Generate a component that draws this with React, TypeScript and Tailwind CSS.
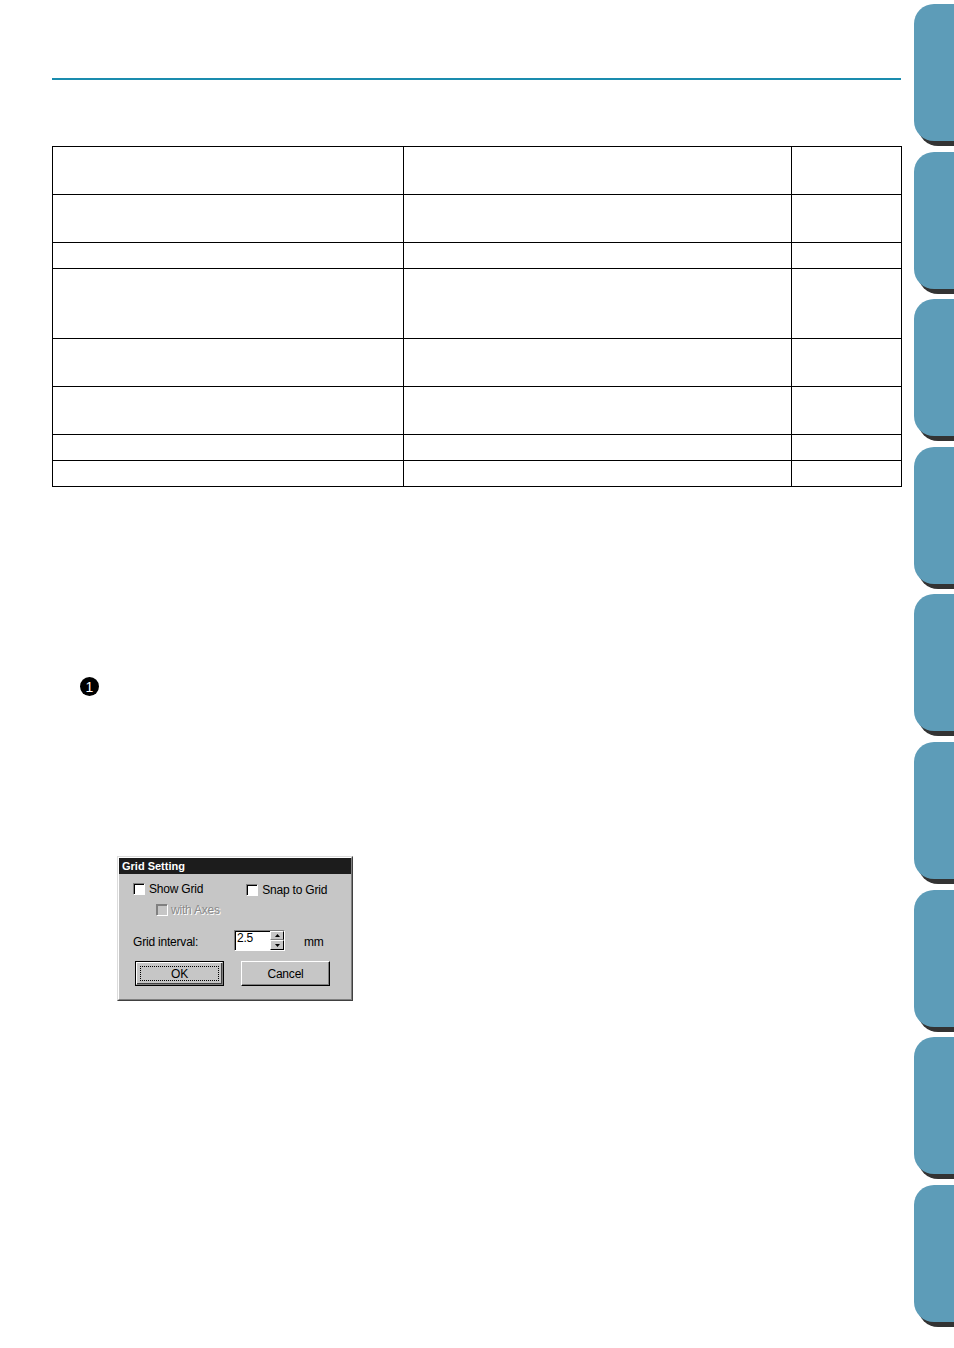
const rows = [48, 48, 26, 70, 48, 48, 26, 26];
const tabs = [0, 1, 2, 3, 4, 5, 6, 7, 8];

function Checkbox({ disabled }: { disabled?: boolean }) {
  return (
    <div
      className={`w-[12px] h-[12px] shrink-0 border border-t-[#808080] border-l-[#808080] border-r-white border-b-white ${
        disabled ? "bg-[#c6c6c6] shadow-[inset_1px_1px_0_#808080]" : "bg-white shadow-[inset_1px_1px_0_#000]"
      }`}
    />
  );
}

function Button({ label, primary }: { label: string; primary?: boolean }) {
  return (
    <div
      className={`w-[89px] h-[25px] flex items-center justify-center ${
        primary ? "border border-black" : "border border-t-white border-l-white border-r-black border-b-black"
      }`}
    >
      <div
        className={`w-full h-full flex items-center justify-center ${
          primary
            ? "border border-t-white border-l-white border-r-[#808080] border-b-[#808080] shadow-[inset_-1px_-1px_0_#404040]"
            : "shadow-[inset_-1px_-1px_0_#808080]"
        }`}
      >
        {primary ? (
          <div className="w-[79px] h-[15px] border border-dotted border-black flex items-center justify-center">
            {label}
          </div>
        ) : (
          label
        )}
      </div>
    </div>
  );
}

function GridDialog() {
  return (
    <div className="w-[236px] h-[145px] border border-t-[#dcdcdc] border-l-[#dcdcdc] border-r-[#404040] border-b-[#404040] bg-[#c6c6c6]">
      <div className="w-full h-full border border-t-white border-l-white border-r-[#808080] border-b-[#808080] flex flex-col text-[12px] leading-[14px] text-black font-['Liberation_Sans',Arial,sans-serif] tracking-[-0.2px]">
        <div className="h-[16px] bg-[#1c1c1c] text-white font-bold text-[11px] leading-[16px] pl-[3px] tracking-normal">Grid Setting</div>
        <div className="flex items-center mt-[7px] pl-[14px]">
          <Checkbox />
          <span className="ml-[4px]">Show Grid</span>
          <div className="ml-[43px] mt-[2px] flex items-center">
            <Checkbox />
            <span className="ml-[4px]">Snap to Grid</span>
          </div>
        </div>
        <div className="flex items-center mt-[6px] pl-[37px]">
          <Checkbox disabled />
          <span className="ml-[3px] text-[#8a8a8a] [text-shadow:1px_1px_0_#fff]">with Axes</span>
        </div>
        <div className="flex items-center mt-[13px] pl-[14px]">
          <span className="w-[101px] mt-[2px]">Grid interval:</span>
          <div className="flex w-[51px] h-[21px] border border-t-[#808080] border-l-[#808080] border-r-white border-b-white">
            <div className="flex-1 bg-white shadow-[inset_1px_1px_0_#000] pl-[2px] text-[12px] leading-[15px]">2.5</div>
            <div className="w-[14px] flex flex-col bg-white">
              <div className="h-[9px] bg-[#c6c6c6] border border-t-white border-l-white border-r-black border-b-[#808080] flex items-center justify-center">
                <svg width="5" height="3" viewBox="0 0 5 3"><path d="M2.5 0 L5 3 L0 3 Z" fill="#000" /></svg>
              </div>
              <div className="h-[10px] bg-[#c6c6c6] border border-t-white border-l-white border-r-black border-b-black flex items-center justify-center">
                <svg width="5" height="3" viewBox="0 0 5 3"><path d="M0 0 L5 0 L2.5 3 Z" fill="#000" /></svg>
              </div>
            </div>
          </div>
          <span className="ml-[19px] mt-[3px]">mm</span>
        </div>
        <div className="flex mt-[10px] pl-[16px] gap-[17px]">
          <Button label="OK" primary />
          <Button label="Cancel" />
        </div>
      </div>
    </div>
  );
}

export default function App() {
  return (
    <div className="w-[954px] h-[1348px] bg-white flex overflow-hidden font-['Liberation_Sans',Arial,sans-serif]">
      <div className="w-[914px] shrink-0 pl-[52px] pr-[12px] pt-[78px] flex flex-col">
        <div className="h-[2px] bg-[#1a8cae] mr-[1px]" />

        <div className="mt-[66px] border-t border-l border-black">
          {rows.map((h, i) => (
            <div key={i} className="flex border-b border-black" style={{ height: h }}>
              <div className="w-[351px] shrink-0 border-r border-black" />
              <div className="w-[388px] shrink-0 border-r border-black" />
              <div className="w-[110px] shrink-0 border-r border-black" />
            </div>
          ))}
        </div>

        <div className="mt-[190px] ml-[28px] w-[19px] h-[19px] rounded-full bg-black text-white flex items-center justify-center text-[14px] leading-none">
          1
        </div>

        <div className="mt-[160px] ml-[65px]">
          <GridDialog />
        </div>
      </div>

      <div className="w-[40px] shrink-0 pt-[4px] flex flex-col gap-[10.6px]">
        {tabs.map((t) => (
          <div
            key={t}
            className="h-[137px] w-[40px] shrink-0 bg-[#5d9cb8] rounded-l-[20px] shadow-[4px_5px_0_#333333]"
          />
        ))}
      </div>
    </div>
  );
}
